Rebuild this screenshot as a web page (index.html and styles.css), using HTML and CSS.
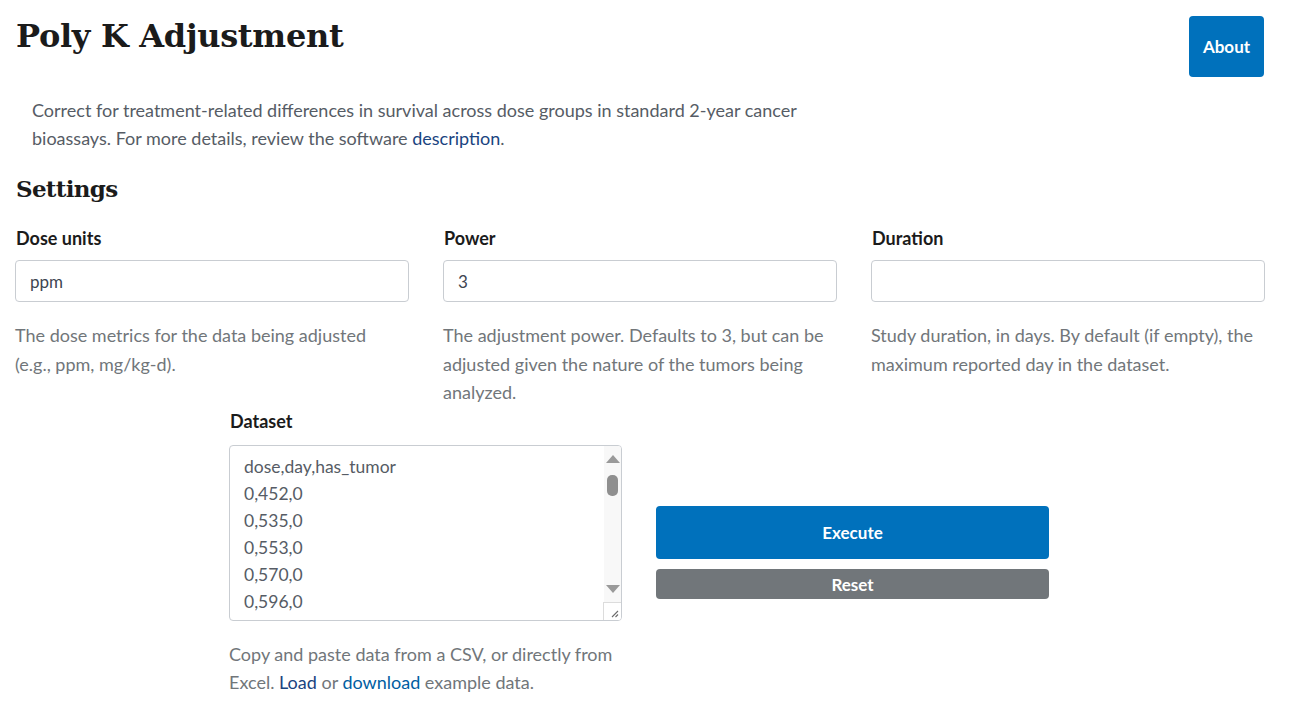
FILE: index.html
```html
<!DOCTYPE html>
<html lang="en">
<head>
<meta charset="utf-8">
<title>Poly K Adjustment</title>
<link rel="stylesheet" href="styles.css">
</head>
<body>
<main class="page">
  <header class="header">
    <h1 class="title">Poly K Adjustment</h1>
    <button class="btn btn-primary btn-about" type="button">About</button>
  </header>
  <p class="lead">Correct for treatment-related differences in survival across dose groups in standard 2-year cancer bioassays. For more details, review the software <a class="link-dark" href="#">description</a>.</p>
  <h2 class="section-title">Settings</h2>
  <div class="settings-grid">
    <div class="field">
      <label class="field-label" for="units">Dose units</label>
      <input class="input" id="units" type="text" value="ppm">
      <p class="help">The dose metrics for the data being adjusted (e.g., ppm, mg/kg-d).</p>
    </div>
    <div class="field">
      <label class="field-label" for="power">Power</label>
      <input class="input" id="power" type="text" value="3">
      <p class="help">The adjustment power. Defaults to 3, but can be adjusted given the nature of the tumors being analyzed.</p>
    </div>
    <div class="field">
      <label class="field-label" for="duration">Duration</label>
      <input class="input" id="duration" type="text" value="">
      <p class="help">Study duration, in days. By default (if empty), the maximum reported day in the dataset.</p>
    </div>
  </div>
  <div class="data-row">
    <div class="field">
      <label class="field-label" for="dataset">Dataset</label>
      <div class="textarea-wrap">
        <textarea class="textarea" id="dataset" spellcheck="false">dose,day,has_tumor
0,452,0
0,535,0
0,553,0
0,570,0
0,596,0
0,617,0
0,625,0
0,652,0
0,676,0
0,682,0
0,700,0
0,720,1
0,730,0
0,730,0
0,730,1
0,730,0
0,730,0
0,730,0
0,730,0</textarea>
        <div class="scrollbar" aria-hidden="true">
          <span class="arrow arrow-up"></span>
          <span class="thumb"></span>
          <span class="arrow arrow-down"></span>
        </div>
        <div class="resizer" aria-hidden="true">
          <svg width="8" height="8" viewBox="0 0 8 8"><path d="M7 1 L1 7 M7 4.5 L4.5 7" stroke="#6b6b6b" stroke-width="1.1" fill="none"/></svg>
        </div>
      </div>
      <p class="help">Copy and paste data from a CSV, or directly from Excel. <a class="link-dark" href="#">Load</a> or <a class="link" href="#">download</a> example data.</p>
    </div>
    <div class="actions">
      <button class="btn btn-primary btn-execute" type="button">Execute</button>
      <button class="btn btn-secondary btn-reset" type="button">Reset</button>
    </div>
  </div>
</main>
</body>
</html>
```

FILE: styles.css
```css
* { box-sizing: border-box; }

html, body {
  margin: 0;
  padding: 0;
  background: #ffffff;
}

body {
  font-family: Lato, "Noto Sans", "Liberation Sans", sans-serif;
  color: #1b1b1b;
}

.page {
  width: 1249px;
  margin-left: 15px;
}

.header {
  display: flex;
  justify-content: space-between;
  align-items: flex-start;
  padding-top: 16px;
}

.title {
  margin: 0;
  padding-left: 1px;
  font-family: "DejaVu Serif", "Liberation Serif", serif;
  font-weight: 700;
  font-size: 32px;
  line-height: 40px;
  color: #1b1b1b;
  letter-spacing: -0.3px;
}

.btn {
  border: 0;
  border-radius: 4px;
  color: #ffffff;
  font-family: Lato, "Noto Sans", sans-serif;
  font-weight: 700;
  font-size: 17px;
  cursor: pointer;
}

.btn-primary { background: #0071bc; }
.btn-secondary { background: #71767a; }

.btn-about {
  width: 75px;
  height: 61px;
  padding: 0;
}

.lead {
  margin: 19px 0 0 17px;
  max-width: 790px;
  font-size: 18px;
  line-height: 28px;
  color: #565c65;
}

.link { color: #005ea2; text-decoration: none; }
.link-dark { color: #1a4480; text-decoration: none; }

.section-title {
  margin: 22px 0 0 1px;
  font-family: "DejaVu Serif", "Liberation Serif", serif;
  font-weight: 700;
  font-size: 23px;
  line-height: 30px;
  letter-spacing: -0.7px;
  color: #1b1b1b;
}

.settings-grid {
  display: grid;
  grid-template-columns: repeat(3, 394px);
  column-gap: 34px;
  margin-top: 22px;
}

.field {
  display: flex;
  flex-direction: column;
}

.field-label {
  padding-left: 1px;
  font-weight: 700;
  font-size: 18px;
  line-height: 24px;
  margin-bottom: 10px;
  color: #1b1b1b;
}

.input {
  height: 42px;
  width: 100%;
  border: 1px solid #c9cdd2;
  border-radius: 4px;
  padding: 0 14px;
  font-family: Lato, "Noto Sans", sans-serif;
  font-size: 17px;
  color: #3d4551;
  background: #ffffff;
}

.help {
  margin: 19px 0 0 0;
  padding-right: 6px;
  font-size: 18px;
  line-height: 28.5px;
  color: #71767a;
}

.data-row {
  display: grid;
  grid-template-columns: 393px 393px;
  column-gap: 34px;
  justify-content: start;
  align-items: center;
  padding-left: 214px;
  margin-top: 2px;
}

.data-row .field-label { margin-bottom: 12px; }

.textarea-wrap {
  position: relative;
  height: 176px;
}

.textarea {
  display: block;
  width: 100%;
  height: 176px;
  border: 1px solid #c9cdd2;
  border-radius: 4px;
  padding: 7px 24px 0 14px;
  font-family: Lato, "Noto Sans", sans-serif;
  font-size: 17.5px;
  line-height: 27px;
  color: #565c65;
  resize: none;
  overflow: hidden;
  background: #ffffff;
}

.scrollbar {
  position: absolute;
  top: 1px;
  right: 1px;
  width: 17px;
  height: 157px;
  background: #f8f8f8;
  border-top-right-radius: 3px;
}

.arrow {
  position: absolute;
  left: 2px;
  width: 0;
  height: 0;
  border-left: 7px solid transparent;
  border-right: 7px solid transparent;
}

.arrow-up {
  top: 9px;
  border-bottom: 8px solid #9a9a9a;
}

.arrow-down {
  bottom: 10px;
  border-top: 8px solid #9a9a9a;
}

.thumb {
  position: absolute;
  top: 29px;
  left: 3px;
  width: 11px;
  height: 21px;
  border-radius: 5px;
  background: #8f8f8f;
}

.resizer {
  position: absolute;
  right: 1px;
  bottom: 1px;
  width: 18px;
  height: 18px;
  background: #ffffff;
  border-left: 1px solid #dcdcdc;
  border-top: 1px solid #dcdcdc;
  display: flex;
  align-items: flex-end;
  justify-content: flex-end;
  padding: 0 2px 2px 0;
  border-bottom-right-radius: 3px;
}

.resizer svg { display: block; }

.data-row .help { margin-top: 19px; }

.actions {
  display: flex;
  flex-direction: column;
  gap: 10px;
}

.btn-execute {
  height: 53px;
  width: 100%;
}

.btn-reset {
  height: 30px;
  width: 100%;
}
```
